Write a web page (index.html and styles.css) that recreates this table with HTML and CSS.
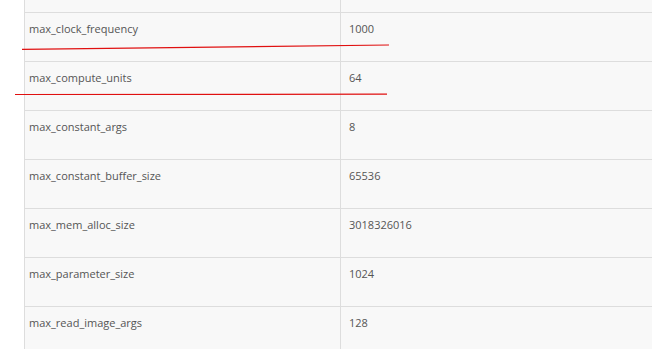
FILE: index.html
```html
<!DOCTYPE html>
<html>
<head>
<meta charset="utf-8">
<link rel="stylesheet" href="styles.css">
</head>
<body>
<div class="page">
  <table class="props">
    <tbody>
      <tr class="lead"><td class="key"></td><td class="val"></td></tr>
      <tr><td class="key">max_clock_frequency</td><td class="val">1000</td></tr>
      <tr><td class="key">max_compute_units</td><td class="val">64</td></tr>
      <tr><td class="key">max_constant_args</td><td class="val">8</td></tr>
      <tr><td class="key">max_constant_buffer_size</td><td class="val">65536</td></tr>
      <tr><td class="key">max_mem_alloc_size</td><td class="val">3018326016</td></tr>
      <tr><td class="key">max_parameter_size</td><td class="val">1024</td></tr>
      <tr><td class="key">max_read_image_args</td><td class="val">128</td></tr>
    </tbody>
  </table>
  <svg class="marks" width="652" height="349" viewBox="0 0 652 349">
    <path d="M22 49.3 L389 45" stroke="#e01010" stroke-width="1.2" fill="none"/>
    <path d="M15 94.5 L387 94.2" stroke="#e01010" stroke-width="1.2" fill="none"/>
  </svg>
</div>
</body>
</html>
```
FILE: styles.css
```css
html, body {
  margin: 0;
  padding: 0;
  background: #ffffff;
}
.page {
  position: relative;
  width: 652px;
  height: 349px;
  overflow: hidden;
}
.props {
  margin: 0 0 0 24px;
  width: 660px;
  border-collapse: collapse;
  table-layout: fixed;
  background: #f8f8f8;
  font-family: "Open Sans", "Noto Sans", sans-serif;
  font-size: 11px;
  line-height: 20px;
  color: #555555;
}
.props td {
  height: 49px;
  box-sizing: border-box;
  vertical-align: top;
  border-top: 1px solid #dddddd;
  padding: 6px 4px 8px;
}
.props .lead td {
  height: 12px;
  padding: 0;
  border-top: 0;
}
.props .key {
  width: 316px;
  border-left: 1px solid #dddddd;
  border-right: 1px solid #dddddd;
}
.props .val {
  padding-left: 8px;
}
.marks {
  position: absolute;
  left: 0;
  top: 0;
  pointer-events: none;
}
```
